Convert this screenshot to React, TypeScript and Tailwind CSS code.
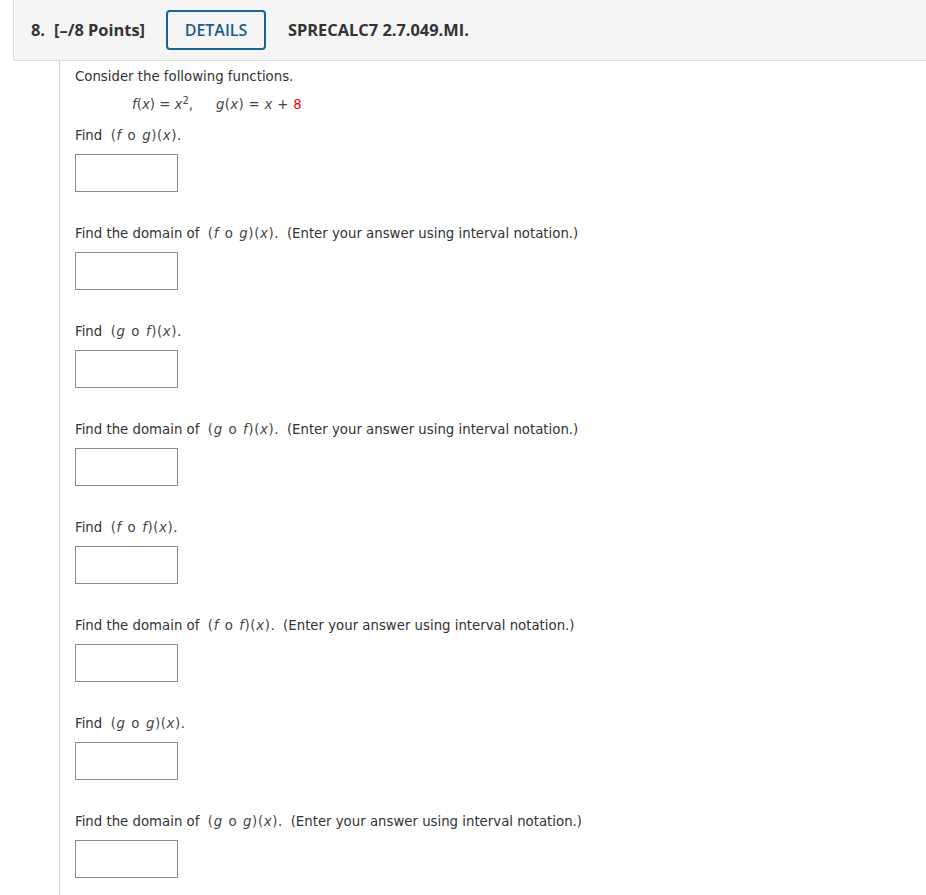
import React from "react";

const mathFont = { fontFamily: '"DejaVu Sans", Verdana, sans-serif' };

function Box() {
  return <div className="mt-2 h-[38px] w-[103px] border border-[#8a8a8a] bg-white" />;
}

function Comp({ a, b }: { a: string; b: string }) {
  return (
    <span className="tracking-[0.6px] text-[#444]">
      (<i>{a}</i>
      <span className="mx-[1px]"> o </span>
      <i>{b}</i>)(<i>x</i>)
    </span>
  );
}

function Block({ children, last }: { children: React.ReactNode; last?: boolean }) {
  return (
    <div className={last ? "" : "mb-[32px]"}>
      <div className="h-[20px] whitespace-nowrap leading-[20px]">{children}</div>
      <Box />
    </div>
  );
}

export default function App() {
  const pairs: [string, string][] = [
    ["f", "g"],
    ["g", "f"],
    ["f", "f"],
    ["g", "g"],
  ];
  return (
    <div className="min-h-[895px] bg-white">
      <div
        className="ml-[13px] flex h-[61px] items-center rounded-bl-[3px] border-b border-l border-[#dcdcdc] bg-[#f5f5f5] pl-[17px]"
        style={{ fontFamily: '"Open Sans", sans-serif' }}
      >
        <span className="text-[16.4px] font-bold text-[#333]">
          8.<span className="ml-[9px]">[–/8 Points]</span>
        </span>
        <div className="ml-[21px] flex h-[40px] w-[100px] items-center justify-center rounded-[4px] border-2 border-[#1b6396] text-[16px] font-semibold text-[#1d5f8a]">
          DETAILS
        </div>
        <span className="ml-[22px] text-[16.4px] font-bold text-[#333]">SPRECALC7 2.7.049.MI.</span>
      </div>
      <div
        className="ml-[59px] min-h-[834px] border-l border-[#cfcfcf] pl-[15px] pt-[6px] text-[13.3px] text-[#333]"
        style={mathFont}
      >
        <div className="h-[20px] leading-[20px]">Consider the following functions.</div>
        <div className="mt-[8px] h-[20px] whitespace-nowrap pl-[57px] leading-[20px] text-[#444]">
          <i>f</i>(<i>x</i>) = <i>x</i>
          <sup className="text-[10px]">2</sup>,<span className="inline-block w-[23px]" />
          <span className="tracking-[0.3px]">
            <i>g</i>(<i>x</i>) = <i>x</i> + <span className="text-[#e00]">8</span>
          </span>
        </div>
        <div className="mt-[11px]">
          {pairs.map(([a, b], i) => (
            <React.Fragment key={i}>
              <Block>
                Find&nbsp; <Comp a={a} b={b} />.
              </Block>
              <Block last={i === pairs.length - 1}>
                Find the domain of&nbsp; <Comp a={a} b={b} />.&nbsp; (Enter your answer using interval notation.)
              </Block>
            </React.Fragment>
          ))}
        </div>
      </div>
    </div>
  );
}
